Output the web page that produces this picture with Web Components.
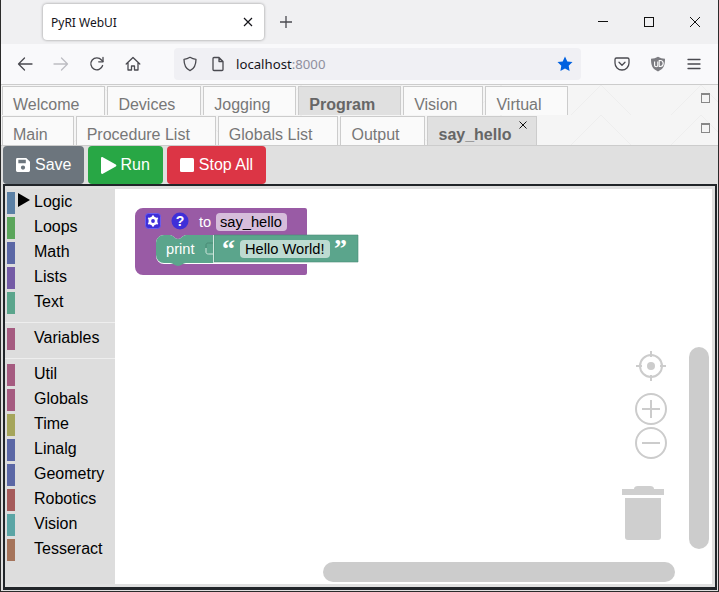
<!DOCTYPE html>
<html>
<head>
<meta charset="utf-8">
<title>PyRI WebUI</title>
<style>
  html, body { margin: 0; height: 100%; overflow: hidden; background: #e0e0e0; }
  body { font-family: "Liberation Sans", Arial, sans-serif; }
</style>
</head>
<body>
<browser-window>
  <app-tabs>
    <dock-tab>Welcome</dock-tab>
    <dock-tab>Devices</dock-tab>
    <dock-tab>Jogging</dock-tab>
    <dock-tab active>Program</dock-tab>
    <dock-tab>Vision</dock-tab>
    <dock-tab>Virtual</dock-tab>
  </app-tabs>
  <app-tabs ruled>
    <dock-tab>Main</dock-tab>
    <dock-tab>Procedure List</dock-tab>
    <dock-tab>Globals List</dock-tab>
    <dock-tab>Output</dock-tab>
    <dock-tab active closable>say_hello</dock-tab>
  </app-tabs>
  <action-bar></action-bar>
  <blockly-frame>
    <toolbox-list></toolbox-list>
    <block-workspace></block-workspace>
  </blockly-frame>
</browser-window>

<script>
class BrowserWindow extends HTMLElement {
  constructor() {
    super();
    this.attachShadow({ mode: "open" });
  }

  connectedCallback() {
    const stroke = `fill="none" stroke="#4a4a50" stroke-width="1.3" stroke-linecap="round" stroke-linejoin="round"`;
    this.shadowRoot.innerHTML = /* html */`
    <style>
      :host {
        display: flex;
        flex-direction: column;
        width: 719px;
        height: 592px;
        box-sizing: border-box;
        border: 1px solid #2b2b2b;
        border-top: 0;
        background: #e0e0e0;
      }
      .titlebar {
        display: flex;
        align-items: center;
        height: 44px;
        background: #f0f0f2;
        flex: none;
      }
      .tab {
        display: flex;
        align-items: center;
        justify-content: space-between;
        box-sizing: border-box;
        width: 221px;
        height: 36px;
        margin-left: 42px;
        padding: 0 8px 0 8px;
        background: #fff;
        border-radius: 4px;
        box-shadow: 0 0 3px #0006;
        font: 12px "Noto Sans", sans-serif;
        color: #15141a;
      }
      .plus { margin-left: 14px; display: flex; }
      .winctl { margin-left: auto; display: flex; gap: 30px; padding-right: 15px; }
      .navbar {
        display: flex;
        align-items: center;
        height: 41px;
        box-sizing: border-box;
        background: #f9f9fb;
        border-bottom: 1px solid #ccc;
        flex: none;
      }
      .navbar .btn { display: flex; width: 16px; height: 16px; }
      .nav { display: flex; gap: 20px; padding-left: 16px; }
      .url {
        display: flex;
        align-items: center;
        box-sizing: border-box;
        width: 407px;
        height: 32px;
        margin-left: 33px;
        padding: 0 8px 0 8px;
        background: #f0f0f4;
        border-radius: 4px;
        font: 13.2px "Noto Sans", sans-serif;
        color: #15141a;
      }
      .url span { color: #8f8f9d; }
      .url .address { margin-left: 10px; }
      .url .page { margin-left: 12px; }
      .url .star { margin-left: auto; }
      .tools { display: flex; gap: 20px; margin-left: 33px; }
      .app { display: flex; flex-direction: column; flex: 1; min-height: 0; }
    </style>
    <div class="titlebar">
      <div class="tab">
        <div>PyRI WebUI</div>
        <svg width="16" height="16" viewBox="0 0 16 16"><path d="M4 4l8 8M12 4l-8 8" stroke="#15141a" stroke-width="1.2"/></svg>
      </div>
      <div class="plus"><svg width="16" height="16" viewBox="0 0 16 16"><path d="M8 2v12M2 8h12" stroke="#4a4a50" stroke-width="1.3"/></svg></div>
      <div class="winctl">
        <svg width="16" height="16" viewBox="0 0 16 16"><path d="M3 7.5h10" stroke="#111" stroke-width="1"/></svg>
        <svg width="16" height="16" viewBox="0 0 16 16"><rect x="3.5" y="3.5" width="9" height="9" fill="none" stroke="#111"/></svg>
        <svg width="16" height="16" viewBox="0 0 16 16"><path d="M3 3l10 10M13 3L3 13" stroke="#111" stroke-width="1"/></svg>
      </div>
    </div>
    <div class="navbar">
      <div class="nav">
        <svg class="btn" viewBox="0 0 16 16"><path d="M15 8H1.5M7.5 2L1.5 8l6 6" ${stroke}/></svg>
        <svg class="btn" viewBox="0 0 16 16"><path d="M1 8h13.5M8.5 2l6 6-6 6" fill="none" stroke="#bdbdc2" stroke-width="1.3" stroke-linecap="round" stroke-linejoin="round"/></svg>
        <svg class="btn" viewBox="0 0 16 16"><path d="M13.6 9.5A6 6 0 1 1 12.5 4l1.3 1.4" ${stroke}/><path d="M14 1.5v4.3H9.7" ${stroke}/></svg>
        <svg class="btn" viewBox="0 0 16 16"><path d="M1.2 8L8 1.5 14.8 8M3 6.8V14h3.5v-4h3v4H13V6.8" ${stroke}/></svg>
      </div>
      <div class="url">
        <svg class="btn" viewBox="0 0 16 16"><path d="M8 1.3c2 1.3 4 1.9 6 2 0 5.5-1.5 9.5-6 11.4C3.5 12.8 2 8.8 2 3.3c2-.1 4-.7 6-2z" ${stroke}/></svg>
        <svg class="btn page" viewBox="0 0 16 16"><path d="M3 2.5A1 1 0 0 1 4 1.5h5l4 4v8a1 1 0 0 1-1 1H4a1 1 0 0 1-1-1zM9 1.5v4h4" ${stroke}/></svg>
        <div class="address">localhost<span>:8000</span></div>
        <svg class="btn star" viewBox="0 0 16 16"><path d="M8 .6l2.3 4.8 5.2.7-3.8 3.6.9 5.2L8 12.4l-4.600 2.500.9-5.200L.5 6.100l5.200-.7z" fill="#0061e0"/></svg>
      </div>
      <div class="tools">
        <svg class="btn" viewBox="0 0 16 16"><path d="M2.5 2h11A1.5 1.5 0 0 1 15 3.500V7a7 7 0 0 1-14 0V3.500A1.500 1.500 0 0 1 2.500 2z" ${stroke}/><path d="M5 6.300L8 9.300l3-3" ${stroke}/></svg>
        <svg class="btn" viewBox="0 0 16 16"><path d="M8 .8c2.200 1.200 4.300 1.800 7 2 0 6-1 10.200-7 12.600-6-2.400-7-6.600-7-12.600 2.700-.2 4.800-.8 7-2z" fill="#7d7d82"/><path d="M4.600 5.500v3.700a1.600 1.600 0 0 0 3.200 0V5.500" fill="none" stroke="#fff" stroke-width="1.100"/><path d="M9.200 4.500v6h1a3 3 0 0 0 0-6z" fill="none" stroke="#fff" stroke-width="1.100"/></svg>
        <svg class="btn" viewBox="0 0 16 16"><path d="M2 3.500h12M2 8h12M2 12.500h12" ${stroke}/></svg>
      </div>
    </div>
    <div class="app"><slot></slot></div>`;
  }
}

class AppTabs extends HTMLElement {
  constructor() {
    super();
    this.attachShadow({ mode: "open" });
  }

  connectedCallback() {
    this.shadowRoot.innerHTML = /* html */`
    <style>
      :host {
        display: flex;
        align-items: flex-end;
        justify-content: space-between;
        height: 30px;
        flex: none;
        padding-left: 1px;
        background-color: #f5f5f5;
        background-image:
          linear-gradient(45deg, transparent 49.7%, #eeeeee 50%, transparent 50.3%),
          linear-gradient(-45deg, transparent 49.7%, #eeeeee 50%, transparent 50.3%);
        background-size: 100px 100px;
        box-sizing: border-box;
      }
      :host([ruled]) {
        height: 31px;
        border-bottom: 1px solid #ccc;
      }
      .tabs { display: flex; gap: 2px; align-items: flex-end; }
      .expand {
        width: 7px;
        height: 7px;
        border: 1px solid #888;
        border-top-width: 2px;
        margin: 0 8px 12px 0;
      }
    </style>
    <div class="tabs"><slot></slot></div>
    <div class="expand"></div>`;
  }
}

class DockTab extends HTMLElement {
  constructor() {
    super();
    this.attachShadow({ mode: "open" });
  }

  connectedCallback() {
    this.shadowRoot.innerHTML = /* html */`
    <style>
      :host {
        display: block;
        position: relative;
        box-sizing: border-box;
        height: 29px;
        padding: 8px 25px 0 10px;
        background: #fafafa;
        border: 1px solid #ccc;
        border-bottom: 0;
        font-size: 16px;
        line-height: 20px;
        color: #777;
      }
      :host([active]) {
        background: #e0e0e0;
        font-weight: bold;
        color: #666;
      }
      svg { position: absolute; right: 8px; top: 3px; }
    </style>
    <slot></slot>
    ${this.hasAttribute("closable") ? `<svg width="10" height="10" viewBox="0 0 10 10"><path d="M1.5 1.5l7 7M8.5 1.5l-7 7" stroke="#111" stroke-width="1"/></svg>` : ""}`;
  }
}

class ActionBar extends HTMLElement {
  constructor() {
    super();
    this.attachShadow({ mode: "open" });
  }

  connectedCallback() {
    this.shadowRoot.innerHTML = /* html */`
    <style>
      :host {
        display: flex;
        gap: 4px;
        height: 38px;
        flex: none;
        padding-left: 2px;
        background: #e0e0e0;
      }
      button {
        display: flex;
        align-items: center;
        gap: 5px;
        height: 38px;
        padding: 0 13px;
        border: 0;
        border-radius: 4px;
        color: #fff;
        font: 16px "Liberation Sans", Arial, sans-serif;
      }
      svg { overflow: visible; }
      .save { background: #6c757d; }
      .run { background: #28a745; }
      .stop { background: #dc3545; }
    </style>
    <button class="save">
      <svg width="14" height="14" viewBox="0 0 15 15"><path d="M1.5 0H11l4 4v9.500a1.500 1.500 0 0 1-1.500 1.500h-12A1.500 1.500 0 0 1 0 13.500v-12A1.500 1.500 0 0 1 1.500 0zM2.500 2v3.500h8V2zM7.500 8a2.300 2.300 0 1 0 0 4.600 2.300 2.300 0 0 0 0-4.600z" fill="#fff" fill-rule="evenodd"/></svg>
      Save
    </button>
    <button class="run">
      <svg width="14" height="17" viewBox="0 0 14 17"><path d="M0 1.200C0 .2 1 -.3 1.800 .2l13 7.200c.8.500.8 1.600 0 2l-13 7.400C1 17.300 0 16.800 0 15.800z" fill="#fff"/></svg>
      Run
    </button>
    <button class="stop">
      <svg width="14" height="14" viewBox="0 0 14 14"><rect width="14" height="14" rx="1.5" fill="#fff"/></svg>
      Stop All
    </button>`;
  }
}

class BlocklyFrame extends HTMLElement {
  constructor() {
    super();
    this.attachShadow({ mode: "open" });
  }

  connectedCallback() {
    this.shadowRoot.innerHTML = /* html */`
    <style>
      :host {
        display: flex;
        flex: 1;
        min-height: 0;
        margin: 0 1px 1px 2px;
        border: 2px solid #212529;
        border-bottom-width: 3px;
        padding: 3px 3px 3px 0;
        background: #e0e0e0;
      }
    </style>
    <slot></slot>`;
  }
}

const TOOLBOX = [
  ["Logic", "#5b80a5"], ["Loops", "#5ba55b"], ["Math", "#5b67a5"],
  ["Lists", "#745ba5"], ["Text", "#5ba58c"], null,
  ["Variables", "#a55b80"], null,
  ["Util", "#a55b80"], ["Globals", "#a55b80"], ["Time", "#a5a55b"],
  ["Linalg", "#5b67a5"], ["Geometry", "#5b67a5"], ["Robotics", "#a55b5b"],
  ["Vision", "#5ba5a5"], ["Tesseract", "#a5745b"]
];

class ToolboxList extends HTMLElement {
  constructor() {
    super();
    this.attachShadow({ mode: "open" });
  }

  connectedCallback() {
    const rows = TOOLBOX.map((item, i) => item ? `
      <div class="row">
        <i style="background:${item[1]}"></i>
        ${i === 0 ? `<svg width="12" height="14" viewBox="0 0 12 14"><path d="M0 0l12 7-12 7z" fill="#000"/></svg>` : ""}
        <span>${item[0]}</span>
      </div>` : `<div class="sep"></div>`).join("");
    this.shadowRoot.innerHTML = /* html */`
    <style>
      :host {
        display: block;
        width: 110px;
        flex: none;
        background: #ddd;
        font-size: 16px;
        color: #000;
      }
      .row {
        position: relative;
        display: flex;
        align-items: center;
        height: 25px;
        padding-left: 29px;
      }
      i {
        position: absolute;
        left: 2px;
        top: 3px;
        width: 8px;
        height: 22px;
      }
      svg { position: absolute; left: 13px; top: 4px; }
      .sep { height: 1px; margin: 8px 0 2px 0; background: #eee; }
    </style>
    ${rows}`;
  }
}

class BlockWorkspace extends HTMLElement {
  constructor() {
    super();
    this.attachShadow({ mode: "open" });
  }

  connectedCallback() {
    this.shadowRoot.innerHTML = /* html */`
    <style>
      :host { display: block; flex: 1; min-width: 0; background: #fff; overflow: hidden; }
      svg { display: block; width: 100%; height: 100%; }
      text { font: 14.67px "Liberation Sans", Arial, sans-serif; fill: #fff; }
      text.dark { fill: #000; }
    </style>
    <svg viewBox="115 189 597 395">
      <path d="M143 208H305a2 2 0 0 1 2 2V235H186c-3 0-5 4-8 4s-5-4-8-4H164a8 8 0 0 0-8 8V256a8 8 0 0 0 8 8H307V273a2 2 0 0 1-2 2H143a8 8 0 0 1-8-8V216a8 8 0 0 1 8-8z" fill="#995ba5"/>
      <rect x="145.5" y="213.5" width="15" height="15" rx="3" fill="#3f2fd8" stroke="#6a5cf0"/>
      <g fill="none" stroke="#fff">
        <circle cx="153" cy="221" r="3.3" stroke-width="2.4"/>
        <path d="M153 215.500v11M148.200 218.200l9.600 5.600M148.200 223.800l9.600-5.600" stroke-width="2"/>
      </g>
      <circle cx="153" cy="221" r="1.9" fill="#3f2fd8"/>
      <circle cx="180" cy="221" r="8.5" fill="#3f2fd8"/>
      <text x="180" y="226" text-anchor="middle" style="font-size:14px;font-weight:bold">?</text>
      <text x="199" y="227">to</text>
      <rect x="216" y="213" width="71" height="18" rx="4" fill="#d6bddb"/>
      <text class="dark" x="220" y="227">say_hello</text>

      <path d="M164 235H170c3 0 5 4 8 4s5-4 8-4H214V263H186c-3 0-5 3-8 3s-5-3-8-3H164a8 8 0 0 1-8-8V243a8 8 0 0 1 8-8z" fill="#5ba58c"/>
      <path d="M214 235H358V262H214z" fill="#5ba58c" stroke="#4a8a75" stroke-width=".6"/>
      <path d="M213.500 235v28" stroke="#cfe6dc" stroke-width="1"/>
      <path d="M213 243h-4.500c-2 0-2.500 1-2.500 2v3" fill="none" stroke="#4a8a75" stroke-width="1"/>
      <path d="M206 248v4c0 1 .5 2 2.500 2h4.500" fill="none" stroke="#cfe6dc" stroke-width="1"/>
      <text x="166" y="254">print</text>
      <text x="222" y="257" style="font-size:26px;font-family:'Liberation Serif',serif;font-weight:bold">“</text>
      <rect x="240" y="240" width="90" height="18" rx="4" fill="#bddbd1"/>
      <text class="dark" x="245" y="254">Hello World!</text>
      <text x="334" y="257" style="font-size:26px;font-family:'Liberation Serif',serif;font-weight:bold">”</text>

      <g fill="none" stroke="#ccc" stroke-width="2">
        <circle cx="651" cy="366" r="11"/>
        <path d="M651 351v6M651 375v6M636 366h6M660 366h6"/>
        <circle cx="651" cy="409" r="15"/>
        <path d="M642 409h18M651 400v18"/>
        <circle cx="651" cy="443" r="15"/>
        <path d="M642 443h18"/>
      </g>
      <circle cx="651" cy="366" r="4" fill="#ccc"/>
      <path d="M622 489h12a4 3 0 0 1 4-3h12a4 3 0 0 1 4 3h10v6H622z" fill="#cfcfcf"/>
      <path d="M625 498h36v39a3 3 0 0 1-3 3H628a3 3 0 0 1-3-3z" fill="#cfcfcf"/>

      <rect x="689" y="347" width="20" height="202" rx="10" fill="#ccc"/>
      <rect x="323" y="562" width="352" height="20" rx="10" fill="#ccc"/>
    </svg>`;
  }
}

customElements.define("browser-window", BrowserWindow);
customElements.define("app-tabs", AppTabs);
customElements.define("dock-tab", DockTab);
customElements.define("action-bar", ActionBar);
customElements.define("blockly-frame", BlocklyFrame);
customElements.define("toolbox-list", ToolboxList);
customElements.define("block-workspace", BlockWorkspace);
</script>
</body>
</html>
